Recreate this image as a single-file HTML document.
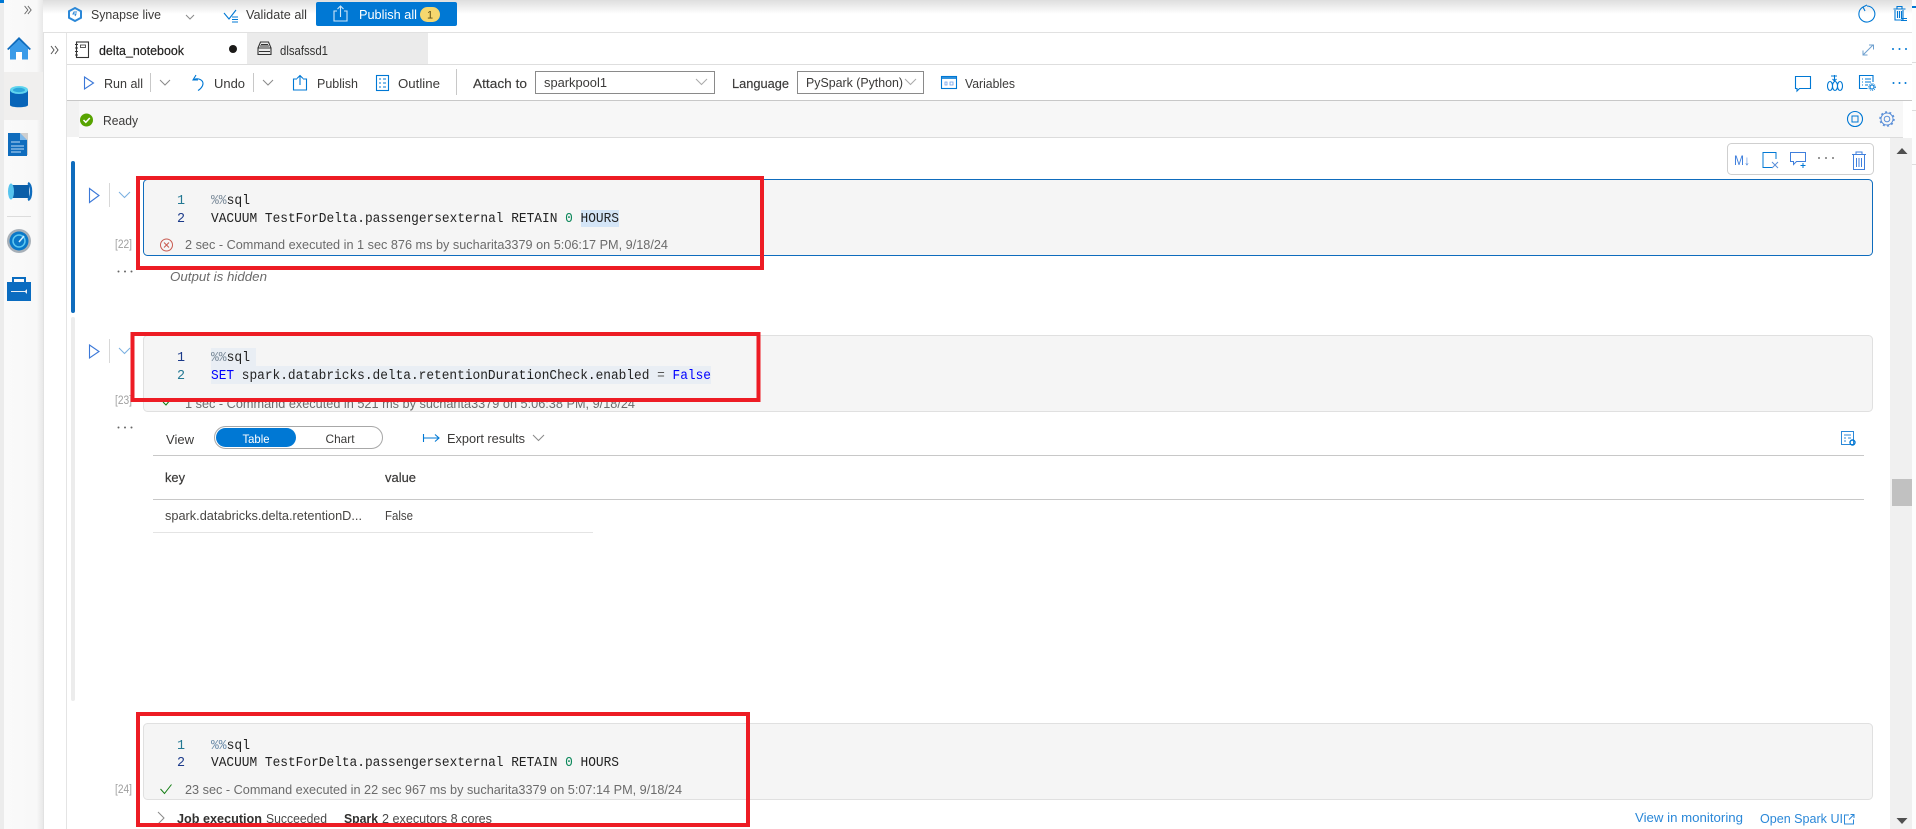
<!DOCTYPE html>
<html><head><meta charset="utf-8"><title>delta_notebook</title>
<style>
html,body{margin:0;padding:0;background:#fff;width:1916px;height:829px;overflow:hidden}
svg{display:block;font-family:"Liberation Sans",sans-serif}
.m{font-family:"Liberation Mono",monospace;font-size:13.4px}
.s{font-size:13px;fill:#3b3a39}
.t{font-size:12.5px;fill:#6b6b6b}
.i{fill:none;stroke:#0078d4;stroke-width:1.1}
.c{fill:none;stroke:#8a8a8a;stroke-width:1}
</style></head><body>
<svg width="1916" height="829" viewBox="0 0 1916 829" xmlns="http://www.w3.org/2000/svg">
<defs>
<linearGradient id="g" x1="0" y1="0" x2="0" y2="1"><stop offset="0" stop-color="#dedede"/><stop offset="1" stop-color="#fff"/></linearGradient>
<linearGradient id="r" x1="0" y1="0" x2="1" y2="0"><stop offset="0" stop-color="#fafafa"/><stop offset=".85" stop-color="#f8f8f8"/><stop offset="1" stop-color="#e8e8e8"/></linearGradient>
</defs>
<rect width="1916" height="829" fill="#fff"/>
<!-- top -->
<rect x="43" y="0" width="1869" height="14" fill="url(#g)"/>
<rect x="43" y="32" width="1869" height="1" fill="#e1e1e1"/>
<path d="M75 8l6 3.2v6.6l-6 3.2-6-3.2v-6.6z" fill="none" stroke="#2b88d8" stroke-width="2"/><path d="M77 12h-3l-1 2h3l-1 2" fill="none" stroke="#2b88d8"/>
<text x="91" y="19" class="s" textLength="70" lengthAdjust="spacingAndGlyphs">Synapse live</text>
<path d="M186 15l4 4 4-4" class="c"/>
<path d="M224 13l5 6 7-9" class="i" stroke-width="1"/><path d="M232 17h6M232 19.500h6M232 22h6" class="i"/>
<text x="246" y="19" class="s" textLength="61" lengthAdjust="spacingAndGlyphs">Validate all</text>
<rect x="316" y="2" width="141" height="24" rx="2" fill="#0078d4"/>
<path d="M337 11h-3v10h13v-10h-3M340.500 17V6M337.500 9l3-3 3 3" fill="none" stroke="#cfe6f7" stroke-width="1.100"/>
<text x="359" y="19" font-size="13" fill="#fff" textLength="58" lengthAdjust="spacingAndGlyphs">Publish all</text>
<rect x="420" y="7" width="20" height="15" rx="7.500" fill="#f5d76e"/>
<text x="430" y="18.500" font-size="11" fill="#5a4a10" text-anchor="middle">1</text>
<!-- refresh / right top -->
<path d="M1863 7a8 8 0 1 0 4-1M1863 7l4-2M1863 7l2 4" class="i"/>
<path d="M1895 10v10h8v-10M1893.500 9h12M1897 9v-2.500h5V9M1897.500 11v7M1899.500 11v7M1901.500 11v7" class="i"/><path d="M1901 18.500h6M1901 20.500h6" class="i"/>
<!-- left rail -->
<rect x="0" y="0" width="43" height="829" fill="url(#r)"/>
<rect x="0" y="0" width="4" height="829" fill="#ececec"/>
<rect x="4" y="72" width="39" height="48" fill="#f0efee"/>
<rect x="0" y="0" width="4" height="3" fill="#0078d4"/>
<path d="M27 6l4 4-4 4M31 6l4 4-4 4" fill="none" stroke="#666" transform="translate(0,0) scale(.82 1) translate(3,0)"/>
<path d="M7 49l12-12 12 12-1.500 1L19 40 8.500 50z" fill="#0f6cbd"/><path d="M10 48l9-8 9 8v11.500H10z" fill="#3a9be8"/><rect x="16" y="52" width="6" height="8" fill="#fff"/>
<path d="M10 90v15c0 3 18 3 18 0V90z" fill="#0764b8"/><ellipse cx="19" cy="90" rx="9" ry="4" fill="#5fd4ee"/><ellipse cx="19" cy="90" rx="6" ry="2.200" fill="#2ea8dc"/>
<path d="M8 133h12l7 7v16H8z" fill="#0f6cbd"/><path d="M20 133h8v22h-1v-15z" fill="#cfcfcf"/><path d="M20 133l7 7h-7z" fill="#7db8ea"/><path d="M11 142h9M11 146h13M11 149h13M11 152h10" stroke="#bcdcf6" stroke-width="1"/>
<rect x="12" y="185" width="17" height="13" fill="#0b5ea8"/><ellipse cx="11" cy="191.500" rx="3" ry="8" fill="#57c4ee"/><path d="M28 183c4 2 4 15 0 17" fill="none" stroke="#0f6cbd" stroke-width="2.500"/>
<rect x="7" y="216" width="24" height="1" fill="#dcdcdc"/>
<circle cx="19" cy="241" r="12" fill="#a8b0b8"/><circle cx="19" cy="241" r="9.500" fill="#0a78c8"/><circle cx="19" cy="241" r="6" fill="none" stroke="#5fc8f0" stroke-width="1.500"/><path d="M19 242l5-6" stroke="#d0eeff" stroke-width="1.500"/>
<rect x="7" y="282" width="24" height="19" fill="#0a6cc0"/><path d="M13 282v-4h12v4" fill="none" stroke="#0a6cc0" stroke-width="2"/><path d="M11 291h14l2-2v5l-2-2H11z" fill="#e8eef4"/>
<!-- second column -->
<rect x="43" y="33" width="1" height="796" fill="#e2e2e2"/>
<rect x="66" y="33" width="1" height="796" fill="#e4e4e4"/>
<path d="M51 46l3 4-3 4M55 46l3 4-3 4" fill="none" stroke="#555"/>
<!-- tabs -->
<rect x="247" y="33" width="181" height="31" fill="#ebebeb"/>
<rect x="67" y="64" width="1845" height="1" fill="#dedede"/>
<rect x="76.500" y="42" width="12" height="15.500" fill="none" stroke="#333" stroke-width="1.100"/><path d="M75 44.500h3M75 48h3M75 51.500h3M75 55h3" stroke="#333"/><rect x="80.500" y="45" width="5" height="2.500" fill="none" stroke="#333" stroke-width=".8"/>
<text x="99" y="55" font-size="13" fill="#201f1e" textLength="85" lengthAdjust="spacingAndGlyphs" stroke="#201f1e" stroke-width=".2">delta_notebook</text>
<circle cx="233" cy="49" r="4" fill="#1b1a19"/>
<path d="M258 48l2.500-6h8l2.500 6v6.500h-13zM258 48h13M261 44.500h7M260 46h9M259 51.500h11" fill="none" stroke="#333" stroke-width="1.100"/>
<text x="280" y="55" font-size="13" fill="#323130" textLength="48" lengthAdjust="spacingAndGlyphs">dlsafssd1</text>
<path d="M1863 55l10-10M1869 45h4.500v4.500M1863 50.500v4.500h4.500" fill="none" stroke="#6fa0cf"/>
<g fill="#0078d4"><circle cx="1893" cy="49" r="1"/><circle cx="1899.500" cy="49" r="1"/><circle cx="1906" cy="49" r="1"/></g>
<!-- toolbar -->
<rect x="67" y="100" width="1845" height="1" fill="#c8c8c8"/>
<path d="M84.500 77l9 6-9 6z" fill="none" stroke="#3b78d8" stroke-width="1.100"/>
<text x="104" y="88" class="s" textLength="39" lengthAdjust="spacingAndGlyphs">Run all</text>
<rect x="150" y="73" width="1" height="19" fill="#c8c8c8"/>
<path d="M160 80l5 5 5-5" class="c"/>
<path d="M196 75l-3 5h5M193 80l1-.5c5-2 9 1 9 4s-3 6-5 7" class="i" stroke="#3b78d8"/>
<text x="214" y="88" class="s" textLength="31" lengthAdjust="spacingAndGlyphs">Undo</text>
<rect x="253" y="73" width="1" height="19" fill="#c8c8c8"/>
<path d="M263 80l5 5 5-5" class="c"/>
<path d="M297 79h-3.500v11h13v-11H303M300 85V76M297 78.500l3-3 3 3" class="i"/>
<text x="317" y="88" class="s" textLength="41" lengthAdjust="spacingAndGlyphs">Publish</text>
<rect x="376.500" y="75.500" width="12" height="15" class="i"/><path d="M379 79h2M383 79h3M379 83h2M383 83h3M379 87h2M383 87h3" stroke="#0078d4"/>
<text x="398" y="88" class="s" textLength="42" lengthAdjust="spacingAndGlyphs">Outline</text>
<rect x="456" y="69" width="1" height="26" fill="#c8c8c8"/>
<text x="473" y="88" class="s" textLength="54" lengthAdjust="spacingAndGlyphs" stroke="#3b3a39" stroke-width=".15">Attach to</text>
<rect x="535.500" y="71.500" width="179" height="22" fill="#fff" stroke="#8a8a8a"/>
<text x="544" y="87" class="s" textLength="63" lengthAdjust="spacingAndGlyphs">sparkpool1</text>
<path d="M696 79l5.500 5.500L707 79" fill="none" stroke="#aaa"/>
<text x="732" y="88" class="s" textLength="57" lengthAdjust="spacingAndGlyphs" stroke="#3b3a39" stroke-width=".15">Language</text>
<rect x="797.500" y="71.500" width="126" height="22" fill="#fff" stroke="#8a8a8a"/>
<text x="806" y="87" class="s" textLength="97" lengthAdjust="spacingAndGlyphs">PySpark (Python)</text>
<path d="M905 79l5.500 5.500L916 79" fill="none" stroke="#aaa"/>
<rect x="941.500" y="76.500" width="15" height="12" class="i"/><rect x="941" y="76" width="16" height="3" fill="#0078d4" opacity=".8"/><path d="M945 82h2v3h-2zM950 82h3v3h-3z" fill="none" stroke="#6d9ee8" stroke-width=".8"/>
<text x="965" y="88" class="s" textLength="50" lengthAdjust="spacingAndGlyphs">Variables</text>
<path d="M1795.500 76.500h15v12h-11l-2.500 2.500v-2.500h-1.500z" class="i"/>
<path d="M1831 76h6M1834.500 75v6M1832.500 79l2 2 2-2" class="i"/><ellipse cx="1830" cy="86" rx="2.500" ry="4.500" class="i"/><ellipse cx="1835" cy="86" rx="2.500" ry="4.500" class="i"/><ellipse cx="1840" cy="86" rx="2.500" ry="4.500" class="i"/>
<path d="M1873 82v-6.500h-13.500v13h8" class="i"/><path d="M1862 79h1M1865 79h6M1862 82h1M1865 82h6M1862 85h1M1865 85h3" stroke="#0078d4"/><circle cx="1872" cy="87" r="2" class="i"/><circle cx="1872" cy="87" r="3.300" fill="none" stroke="#0078d4" stroke-dasharray="1 1"/>
<g fill="#0078d4"><circle cx="1893.500" cy="83" r="1"/><circle cx="1899.500" cy="83" r="1"/><circle cx="1905.500" cy="83" r="1"/></g>
<!-- ready row -->
<rect x="67" y="101" width="1836" height="36" fill="#f7f7f7"/>
<rect x="67" y="101" width="12" height="36" fill="#f2f2f2"/>
<rect x="79" y="137" width="1824" height="1" fill="#dcdcdc"/>
<circle cx="86.500" cy="120" r="6.500" fill="#57a300"/><path d="M83.500 120l2.300 2.300 4-4.300" fill="none" stroke="#fff" stroke-width="1.500"/>
<text x="103" y="125" class="s" textLength="35" lengthAdjust="spacingAndGlyphs">Ready</text>
<circle cx="1855" cy="119" r="7.500" class="i"/><rect x="1852" y="116" width="6" height="6" fill="none" stroke="#0078d4"/>
<circle cx="1887" cy="119" r="2.800" fill="none" stroke="#5b8fd8"/><circle cx="1887" cy="119" r="6" fill="none" stroke="#5b8fd8"/><circle cx="1887" cy="119" r="7" fill="none" stroke="#5b8fd8" stroke-width="1.500" stroke-dasharray="2 2.400"/>
<!-- scrollbar -->
<rect x="1890" y="138" width="22" height="691" fill="#f0f0f0"/>
<path d="M1896.500 154l5.500-6 5.500 6z" fill="#505050"/>
<rect x="1892" y="479" width="20" height="27" fill="#c1c1c1"/>
<path d="M1896.500 818l5.500 6 5.500-6z" fill="#505050"/>
<rect x="1912" y="0" width="4" height="829" fill="#fdfdfd"/><rect x="1912" y="6" width="4" height="2" fill="#0078d4"/>
<rect x="1912" y="62" width="4" height="1" fill="#ddd"/><rect x="1912" y="110" width="4" height="1" fill="#ddd"/><rect x="1912" y="164" width="4" height="1" fill="#ddd"/>
<!-- cell bars -->
<rect x="71" y="161" width="4" height="152" rx="2" fill="#0f6cbd"/>
<rect x="71" y="317" width="4" height="384" rx="2" fill="#ececec"/>
<!-- cell 1 -->
<rect x="1727.500" y="143.500" width="146" height="31" rx="4" fill="#fff" stroke="#cfcfcf"/>
<text x="1734" y="165" font-size="13.500" fill="#3f7fdc" textLength="16" lengthAdjust="spacingAndGlyphs">M↓</text>
<path d="M1776 159v-6.500h-13v15h9" fill="none" stroke="#0078d4" stroke-width="1"/><path d="M1772 162l6 6M1778 162l-6 6" fill="none" stroke="#5b8fd8"/>
<path d="M1790.500 152.500h15v9h-9l-3 3v-3h-3z" fill="none" stroke="#3f7fdc"/><path d="M1803 163v5M1800.500 165.500h5" stroke="#0078d4"/>
<g fill="#777"><circle cx="1819" cy="158" r="1"/><circle cx="1826" cy="158" r="1"/><circle cx="1833" cy="158" r="1"/></g>
<path d="M1853.500 155v14.500h11V155M1852 154.500h14M1856 154.500v-2.500h6v2.500M1856.500 158v9M1859 158v9M1861.500 158v9" fill="none" stroke="#3f7fdc"/>
<path d="M94 194l-4.500-6v15l9.500-7.500z" fill="none"/>
<path d="M89.500 188.500l9.500 7-9.500 7z" fill="none" stroke="#3b78d8" stroke-width="1.100"/>
<rect x="109" y="183" width="1" height="24" fill="#d8d8d8"/>
<path d="M119 192l5.500 5.500L130 192" fill="none" stroke="#7ab0e0"/>
<rect x="143.500" y="179.500" width="1729" height="76" rx="4" fill="#f5f5f5" stroke="#0f6cbd"/>
<rect x="581" y="210" width="38" height="17" fill="#d4e5f7"/>
<text x="177" y="204" class="m" fill="#237893">1</text>
<text x="177" y="222" class="m" fill="#1b3a8a">2</text>
<text x="211" y="204" class="m" textLength="39" lengthAdjust="spacingAndGlyphs"><tspan fill="#7a8a99">%%</tspan><tspan fill="#222">sql</tspan></text>
<text x="211" y="222" class="m" fill="#222" textLength="408" lengthAdjust="spacingAndGlyphs">VACUUM TestForDelta.passengersexternal RETAIN <tspan fill="#098658">0</tspan> HOURS</text>
<circle cx="166.500" cy="245" r="6" fill="none" stroke="#c85a50"/><path d="M164 242.500l5 5M169 242.500l-5 5" stroke="#c85a50"/>
<text x="185" y="249" class="t" textLength="483" lengthAdjust="spacingAndGlyphs">2 sec - Command executed in 1 sec 876 ms by sucharita3379 on 5:06:17 PM, 9/18/24</text>
<text x="115" y="248" font-size="11.500" fill="#a0a0a0" textLength="17" lengthAdjust="spacingAndGlyphs">[22]</text>
<g fill="#666"><circle cx="118.500" cy="271.500" r="1"/><circle cx="125" cy="271.500" r="1"/><circle cx="131.500" cy="271.500" r="1"/></g>
<text x="170" y="281" font-size="12.500" font-style="italic" fill="#6b6b6b" textLength="97" lengthAdjust="spacingAndGlyphs">Output is hidden</text>
<!-- cell 2 -->
<path d="M89.500 345l9.500 6.500-9.500 6.500z" fill="none" stroke="#3b78d8" stroke-width="1.100"/>
<rect x="109" y="339" width="1" height="24" fill="#d8d8d8"/>
<path d="M119 348l5.500 5.500L130 348" fill="none" stroke="#7ab0e0"/>
<rect x="143.500" y="335.500" width="1729" height="76" rx="4" fill="#f5f5f5" stroke="#e0e0e0"/>
<rect x="211" y="348" width="45" height="18" fill="#e9eef4"/>
<rect x="211" y="366" width="500" height="18" fill="#e9eef4"/>
<text x="177" y="361" class="m" fill="#1b3a8a">1</text>
<text x="177" y="379" class="m" fill="#237893">2</text>
<text x="211" y="361" class="m" textLength="39" lengthAdjust="spacingAndGlyphs"><tspan fill="#7a8a99">%%</tspan><tspan fill="#222">sql</tspan></text>
<text x="211" y="379" class="m" fill="#222" textLength="500" lengthAdjust="spacingAndGlyphs"><tspan fill="#0000ff">SET</tspan> spark.databricks.delta.retentionDurationCheck.enabled <tspan fill="#555">=</tspan> <tspan fill="#0000ff">False</tspan></text>
<path d="M163 402l3 3 5-6" fill="none" stroke="#107c10"/>
<text x="185" y="408" class="t" textLength="450" lengthAdjust="spacingAndGlyphs">1 sec - Command executed in 521 ms by sucharita3379 on 5:06:38 PM, 9/18/24</text>
<text x="115" y="404" font-size="11.500" fill="#a0a0a0" textLength="17" lengthAdjust="spacingAndGlyphs">[23]</text>
<g fill="#666"><circle cx="118.500" cy="427.500" r="1"/><circle cx="125" cy="427.500" r="1"/><circle cx="131.500" cy="427.500" r="1"/></g>
<text x="166" y="444" class="s" textLength="28" lengthAdjust="spacingAndGlyphs">View</text>
<rect x="214.500" y="426.500" width="168" height="22" rx="11" fill="#fff" stroke="#a8a8a8"/>
<rect x="216" y="428" width="80" height="19" rx="9.500" fill="#0078d4"/>
<text x="256" y="443" font-size="12" fill="#fff" text-anchor="middle" textLength="27" lengthAdjust="spacingAndGlyphs">Table</text>
<text x="340" y="443" font-size="12" fill="#3b3a39" text-anchor="middle" textLength="29" lengthAdjust="spacingAndGlyphs">Chart</text>
<path d="M423.500 434v8M424 438h15M435 434.500l4 3.500-4 3.500" class="i"/>
<text x="447" y="443" class="s" textLength="78" lengthAdjust="spacingAndGlyphs">Export results</text>
<path d="M533 435l5.500 5.500L544 435" class="c"/>
<rect x="1841.500" y="431.500" width="12" height="13" fill="none" stroke="#2b88d8"/><path d="M1844 435h7M1844 438h2M1848 438h3M1844 441h2" stroke="#2b88d8"/><circle cx="1852.500" cy="442.500" r="2.500" fill="none" stroke="#0078d4" stroke-width="1.400"/>
<rect x="153" y="455" width="1711" height="1" fill="#c8c8c8"/>
<text x="165" y="482" class="s" textLength="20" lengthAdjust="spacingAndGlyphs" stroke="#3b3a39" stroke-width=".2">key</text>
<text x="385" y="482" class="s" textLength="31" lengthAdjust="spacingAndGlyphs" stroke="#3b3a39" stroke-width=".2">value</text>
<rect x="153" y="499" width="1711" height="1" fill="#c8c8c8"/>
<text x="165" y="520" font-size="12.500" fill="#484644" textLength="197" lengthAdjust="spacingAndGlyphs">spark.databricks.delta.retentionD...</text>
<text x="385" y="520" font-size="12.500" fill="#484644" textLength="28" lengthAdjust="spacingAndGlyphs">False</text>
<rect x="153" y="532" width="440" height="1" fill="#e4e4e4"/>
<!-- cell 3 -->
<rect x="143.500" y="723.500" width="1729" height="76" rx="4" fill="#f5f5f5" stroke="#e0e0e0"/>
<text x="177" y="749" class="m" fill="#237893">1</text>
<text x="177" y="766" class="m" fill="#1b3a8a">2</text>
<text x="211" y="749" class="m" textLength="39" lengthAdjust="spacingAndGlyphs"><tspan fill="#6a8aa8">%%</tspan><tspan fill="#222">sql</tspan></text>
<text x="211" y="766" class="m" fill="#222" textLength="408" lengthAdjust="spacingAndGlyphs">VACUUM TestForDelta.passengersexternal RETAIN <tspan fill="#098658">0</tspan> HOURS</text>
<path d="M160.500 789l4 4.500 7-9" fill="none" stroke="#107c10"/>
<text x="185" y="794" class="t" textLength="497" lengthAdjust="spacingAndGlyphs">23 sec - Command executed in 22 sec 967 ms by sucharita3379 on 5:07:14 PM, 9/18/24</text>
<text x="115" y="793" font-size="11.500" fill="#a0a0a0" textLength="17" lengthAdjust="spacingAndGlyphs">[24]</text>
<path d="M158 812l6 6-6 6" class="c"/>
<text x="177" y="823" font-size="12.500" font-weight="bold" fill="#323130" textLength="85" lengthAdjust="spacingAndGlyphs">Job execution</text>
<text x="266" y="823" font-size="12.500" fill="#4a4a4a" textLength="61" lengthAdjust="spacingAndGlyphs">Succeeded</text>
<text x="344" y="823" font-size="12.500" font-weight="bold" fill="#323130" textLength="34" lengthAdjust="spacingAndGlyphs">Spark</text>
<text x="382" y="823" font-size="12.500" fill="#4a4a4a" textLength="110" lengthAdjust="spacingAndGlyphs">2 executors 8 cores</text>
<text x="1635" y="822" font-size="13" fill="#2b88d8" textLength="108" lengthAdjust="spacingAndGlyphs">View in monitoring</text>
<text x="1760" y="823" font-size="13" fill="#2b88d8" textLength="83" lengthAdjust="spacingAndGlyphs">Open Spark UI</text>
<path d="M1849 815h-4.500v9h9v-4.500M1849 819.500l5-5M1850.500 814.500h3.500v3.500" fill="none" stroke="#2b88d8"/>
<!-- red boxes -->
<g fill="none" stroke="#ed1c24" stroke-width="4">
<rect x="138" y="178" width="624" height="90"/>
<rect x="132.500" y="334" width="626" height="66"/>
<rect x="138" y="714" width="610" height="111"/>
</g>
</svg>
</body></html>
